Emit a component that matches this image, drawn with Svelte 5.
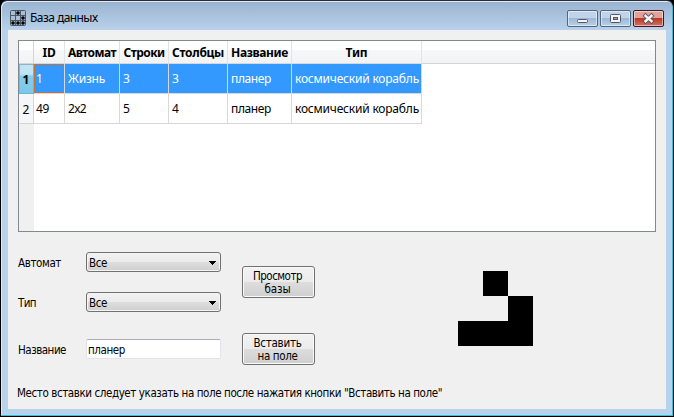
<script>
  const columns = [
    { name: 'ID', w: 31, tw: 13 },
    { name: 'Автомат', w: 55, tw: 48 },
    { name: 'Строки', w: 49, tw: 41 },
    { name: 'Столбцы', w: 59, tw: 52 },
    { name: 'Название', w: 64, tw: 57 },
    { name: 'Тип', w: 130, tw: 22 },
  ];
  const rows = [
    ['1', 'Жизнь', '3', '3', 'планер', 'космический корабль'],
    ['49', '2x2', '5', '4', 'планер', 'космический корабль'],
  ];
  const widths = { 'Жизнь': 37, 'планер': 40, 'космический корабль': 124, '2x2': 18, '49': 13 };

  // Spreads letters so that a label takes exactly the given width.
  function fit(node, width) {
    if (!width) return;
    const natural = node.getBoundingClientRect().width;
    const extra = (width - natural) / node.textContent.length;
    node.style.letterSpacing = `${extra}px`;
  }
</script>

<div class="window">
  <header class="title">
    <svg class="app" width="16" height="16" viewBox="0 0 16 16">
      <rect x=".5" y=".5" width="15" height="15" rx="1" fill="#a9bfd5" stroke="#4b5863" />
      <path d="M5.5 1v14M10.5 1v14M1 5.5h14M1 10.5h14" stroke="#4b5863" />
      <g fill="#000"><circle cx="8" cy="3" r="1.8" /><circle cx="13" cy="8" r="1.8" /><circle cx="3" cy="13" r="1.8" /><circle cx="8" cy="13" r="1.8" /><circle cx="13" cy="13" r="1.8" /></g>
    </svg>
    <span class="caption"><span use:fit={67.5}>База данных</span></span>
    <div class="controls">
      <button aria-label="Свернуть"><svg width="29" height="15"><rect x="9.5" y="8.5" width="10" height="3" rx="1" fill="#f5f5f5" stroke="#535666" /></svg></button>
      <button aria-label="Развернуть"><svg width="29" height="15"><rect x="9.5" y="3.5" width="10" height="8" rx="1" fill="#f5f5f5" stroke="#535666" /><rect x="12.5" y="6.5" width="4" height="2" fill="#8ba9c9" stroke="#535666" /></svg></button>
      <button class="close" aria-label="Закрыть"><svg width="29" height="15"><path d="M11.5 4.8l6 5.4M17.5 4.8l-6 5.4" stroke="#535666" stroke-width="4.2" stroke-linecap="square" /><path d="M11.5 4.8l6 5.4M17.5 4.8l-6 5.4" stroke="#f5f5f5" stroke-width="2.4" stroke-linecap="square" /></svg></button>
    </div>
  </header>

  <main>
    <section class="table">
      <div class="row head">
        <div class="num"></div>
        {#each columns as c}
          <div class="cell" style:width="{c.w}px"><span use:fit={c.tw}>{c.name}</span></div>
        {/each}
        <div class="rest"></div>
      </div>
      {#each rows as row, i}
        <div class="row" class:selected={i === 0}>
          <div class="num"><span>{i + 1}</span></div>
          {#each row as v, j}
            <div class="cell" class:focus={i === 0 && j === 0} style:width="{columns[j].w}px"><span use:fit={widths[v]}>{v}</span></div>
          {/each}
        </div>
      {/each}
      <div class="gutter"></div>
    </section>

    <section class="lower">
      <div class="fields">
        <div class="field"><label for="automaton"><span use:fit={43}>Автомат</span></label>
          <div class="combo" id="automaton"><span use:fit={18}>Все</span><svg width="7" height="4" shape-rendering="crispEdges"><path d="M0 0h7v1H0zM1 1h5v1H1zM2 2h3v1H2zM3 3h1v1H3z" /></svg></div></div>
        <div class="field"><label for="kind"><span use:fit={18}>Тип</span></label>
          <div class="combo" id="kind"><span use:fit={18}>Все</span><svg width="7" height="4" shape-rendering="crispEdges"><path d="M0 0h7v1H0zM1 1h5v1H1zM2 2h3v1H2zM3 3h1v1H3z" /></svg></div></div>
        <div class="field name"><label for="name"><span use:fit={48}>Название</span></label>
          <div class="input" id="name"><span use:fit={37}>планер</span></div></div>
      </div>
      <div class="actions">
        <button><span use:fit={49}>Просмотр</span><span use:fit={26}>базы</span></button>
        <button><span use:fit={48}>Вставить</span><span use:fit={40}>на поле</span></button>
      </div>
      <svg class="pattern" width="75" height="75" shape-rendering="crispEdges"><path d="M25 0h25v25H25zM50 25h25v50H0V50h50z" /></svg>
    </section>
    <p><span use:fit={425}>Место вставки следует указать на поле после нажатия кнопки "Вставить на поле"</span></p>
  </main>
</div>

<style>
  :global(body) { margin: 0; background: #000; overflow: hidden; }
  * { box-sizing: border-box; }
  span { white-space: nowrap; display: inline-block; }
  .window {
    width: 674px; height: 417px; padding: 1px 7px 7px;
    border: 1px solid #000; border-top-color: #302b34; border-radius: 7px 7px 0 0;
    background: linear-gradient(#98b3d1, #b9d1ea 29px, #b9d1ea);
    box-shadow: inset -1px -1px #2bc4dc, inset 1px 1px #dcebf8;
    font: 11.5px/13px "DejaVu Sans Condensed", "DejaVu Sans", "Noto Sans", sans-serif;
    color: #000;
  }
  .title { height: 28px; display: flex; align-items: flex-start; }
  .app { margin: 8px 0 0 2px; }
  .caption { margin: 8px 0 0 4px; font: 12px/16px "Noto Sans", "Open Sans", sans-serif; }
  .caption span { vertical-align: top; }
  .controls { display: flex; gap: 2px; margin: 8px 2px 0 auto; }
  .controls button {
    width: 31px; height: 17px; padding: 0; border: 1px solid #4f6780; border-radius: 2px;
    box-shadow: inset 0 0 0 1px #ffffff80;
    background: linear-gradient(#c0d3e8 0 45%, #9bb8d5 50%, #b9d2ea);
  }
  .controls .close { border-color: #431422; background: linear-gradient(#e3a297 0 45%, #b83a28 50%, #d5705f); }
  .controls svg { display: block; }
  main { width: 658px; height: 379px; padding: 10px; background: #f0f0f0; }
  .table { width: 638px; height: 192px; border: 1px solid #828790; background: #fff; display: flex; flex-direction: column; font: 12px/16px "Noto Sans", "Open Sans", sans-serif; }
  .row { display: flex; height: 30px; flex: none; }
  .num { width: 15px; flex: none; display: flex; align-items: center; justify-content: center; border-right: 1px solid #d5d5d5; border-bottom: 1px solid #d5d5d5; background: #f5f6f7; }
  .cell { flex: none; display: flex; align-items: center; padding-left: 3px; border-right: 1px solid #d8d8d8; border-bottom: 1px solid #d8d8d8; }
  .row:not(.head) .num { padding-top: 2px; }
  .row:not(.head) .num + .cell { padding-left: 2px; }
  .head { height: 23px; background: linear-gradient(#fff 9px, #f7f8fa 9px, #f1f2f4); font-weight: 700; }
  .head .num { background: none; }
  .head .cell { justify-content: center; padding: 1px 0 0; border-right-color: #e2e3e5; }
  .rest { flex: 1; border-bottom: 1px solid #d5d5d5; }
  .selected .cell { background: #3399ff; color: #fff; }
  .selected .num { font-weight: 700; border-color: #6bb5d8; background: linear-gradient(#bfe5f4 0 35%, #85cdeb 42%, #7cc8e8); box-shadow: inset 1px 1px #8fb3c5; }
  .selected .focus { box-shadow: inset 0 0 0 1px #c0733f; }
  .gutter { flex: 1; width: 15px; background: #f0f0f0; }
  .lower { height: 134px; display: flex; padding-top: 20px; }
  .fields { width: 224px; }
  .field { display: flex; align-items: center; height: 20px; margin-bottom: 20px; }
  .field.name { margin-top: 27px; }
  label { width: 68px; padding-top: 2px; }
  .combo { width: 135px; height: 20px; display: flex; align-items: center; justify-content: space-between; padding: 2px 4px 0 2px; border: 1px solid #707070; border-radius: 3px; background: linear-gradient(#f2f2f2, #ebebeb 50%, #dddddd 50%, #cfcfcf); box-shadow: inset 0 0 0 1px #f5f5f5; }
  .input { width: 135px; height: 20px; padding: 4px 1px 0; border: 1px solid #e2e3ea; border-top-color: #abadb3; border-radius: 2px; background: #fff; }
  .actions { padding-top: 14px; width: 216px; }
  .actions button { display: flex; flex-direction: column; align-items: center; justify-content: center; width: 73px; height: 32px; margin: 0 0 35px; padding: 2px 2px 0 0; font: inherit; color: inherit; border: 1px solid #707070; border-radius: 3px; background: linear-gradient(#f2f2f2, #ebebeb 50%, #dddddd 50%, #cfcfcf); box-shadow: inset 0 0 0 1px #fafafa; }
  .pattern { margin-top: 19px; }
  p { margin: 21px 0 0 -1px; }
</style>
